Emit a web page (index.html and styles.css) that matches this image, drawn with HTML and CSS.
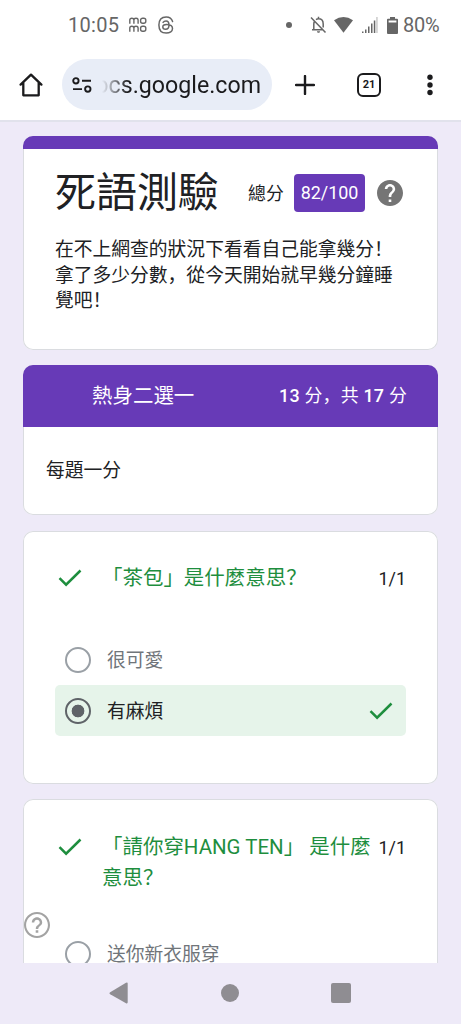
FILE: index.html
```
<!DOCTYPE html>
<html lang="zh-Hans">
<head>
<meta charset="utf-8">
<meta name="viewport" content="width=device-width, initial-scale=1">
<title>死語測驗</title>
<link rel="stylesheet" href="styles.css">
</head>
<body>
<div class="phone">
  <header class="chrome">
    <div class="status">
      <span class="clock">10:05</span>
      <svg class="momo" width="18" height="16" viewBox="0 0 18 16" fill="none" stroke="#666" stroke-width="1.4"><path d="M.8 6.800V3Q.8 1.200 2.800 1.200T4.900 3V6.800M4.900 3Q5 1.200 7 1.200T9.100 3V6.800M.8 14.800v-3.800Q.8 9.200 2.800 9.200T4.900 11v3.800M4.900 11Q5 9.200 7 9.200t2.100 1.800v3.800"/><rect x="11.600" y="1.200" width="5.200" height="5" rx="2"/><rect x="11.600" y="9.200" width="5.200" height="5" rx="2"/></svg>
      <svg class="threads" width="16" height="18" viewBox="0 0 16 18" fill="none" stroke="#666" stroke-width="1.500" stroke-linecap="round"><path d="M14.600 5.500C13.700 2.400 11.500 .9 8.200 .9C3.400 .9 .9 3.900 .9 9s2.500 8.100 7.300 8.100c3.700 0 6.300-1.900 6.300-4.500 0-2.700-2.700-4-6-4-2.400 0-3.700 1-3.700 2.400s1.200 2.300 2.800 2.300c2.200 0 3.400-1.500 3.400-4.300C11 6.300 9.900 5 8 5 6.700 5 5.700 5.500 5.100 6.400"/></svg>
      <span class="notice-dot"></span>
      <svg class="bell" width="17" height="18" viewBox="0 0 17 18" fill="none" stroke="#666" stroke-width="1.500"><path d="M1 1.500l14.500 15M2 13.700h10.500M3.800 13.500V8c0-1.200.3-2.200.9-3M6 3.600c.7-.5 1.500-.8 2.500-.8 2.900 0 4.700 2.200 4.700 5.200v3.500M8.500 .7v2"/><path d="M7 15.300h3c0 2-3 2-3 0z" fill="#666" stroke="none"/></svg>
      <svg class="wifi" width="19" height="16" viewBox="0 0 19 16"><path d="M0 3.300Q9.500-3.100 19 3.300L9.500 15.700z" fill="#666"/></svg>
      <svg class="signal" width="16" height="16" viewBox="0 0 16 16" fill="#666"><path d="M0 14.500h1.500V16H0zM3 12.500h1.500V16H3zM6 9.500h1.500V16H6zM9 6.500h1.500V16H9zM11.800 3.500h1.500V16h-1.500z"/><path d="M14.300 0h1.300v16h-1.300z" opacity=".4"/></svg>
      <svg class="battery" width="11" height="17" viewBox="0 0 11 17"><path d="M3 0h5v1.800h2q1 0 1 1V16q0 1-1 1H1q-1 0-1-1V2.800q0-1 1-1h2z" fill="#666"/><path d="M1.600 3.500h7.800v2H1.600z" fill="#fff"/></svg>
      <span class="percent">80%</span>
    </div>
    <div class="toolbar">
      <svg class="home" width="24" height="24" viewBox="0 0 24 24" fill="none" stroke="#1b1b1d" stroke-width="2.300" stroke-linecap="round" stroke-linejoin="round"><path d="M1.600 11.600L12 1.600l10.400 10M4.300 9.500v12.800h15.400V9.500"/></svg>
      <div class="omnibox">
        <svg width="20" height="16" viewBox="0 0 20 16" fill="none" stroke="#1b1b1d" stroke-width="1.900"><circle cx="3.900" cy="3.800" r="2.700"/><circle cx="15.800" cy="12.100" r="2.700"/><path d="M10 3.800h9M1 12.100h9"/></svg>
        <div class="url"><span>ocs.google.com</span></div>
      </div>
      <svg class="plus" width="20" height="20" viewBox="0 0 20 20" stroke="#1b1b1d" stroke-width="2.400" stroke-linecap="round"><path d="M10 1v18M1 10h18"/></svg>
      <div class="tabs">21</div>
      <svg class="more" width="6" height="22" viewBox="0 0 6 22" fill="#1b1b1d"><circle cx="3" cy="3.200" r="2.700"/><circle cx="3" cy="11" r="2.700"/><circle cx="3" cy="18.500" r="2.700"/></svg>
    </div>
  </header>

  <main class="page">
    <section class="card intro">
      <div class="accent"></div>
      <div class="title-row">
        <h1>死語測驗</h1>
        <span class="total">總分</span>
        <span class="score">82/100</span>
        <svg width="26" height="26" viewBox="2 2 20 20" fill="#757575"><path d="M12 2C6.480 2 2 6.480 2 12s4.480 10 10 10 10-4.480 10-10S17.520 2 12 2zm1 17h-2v-2h2v2zm2.070-7.750l-.9.920C13.450 12.900 13 13.500 13 15h-2v-.5c0-1.100.45-2.100 1.170-2.830l1.240-1.260c.37-.36.59-.86.59-1.410 0-1.100-.9-2-2-2s-2 .9-2 2H8c0-2.210 1.790-4 4-4s4 1.790 4 4c0 .88-.36 1.680-.93 2.250z"/></svg>
      </div>
      <p class="description">在不上網查的狀況下看看自己能拿幾分！<br>拿了多少分數，從今天開始就早幾分鐘睡<br>覺吧！</p>
    </section>

    <section class="card section">
      <div class="section-head"><h2>熱身二選一</h2><span><b>13</b> 分，共 <b>17</b> 分</span></div>
      <p>每題一分</p>
    </section>

    <section class="card question">
      <div class="question-head">
        <svg class="check" width="24" height="18" viewBox="0 0 24 18"><path d="M1.500 9.200l6.600 6.500L22.500 1.500" fill="none" stroke="#1e8e3e" stroke-width="2.500"/></svg>
        <h3>「茶包」是什麼意思？</h3>
        <span class="points">1/1</span>
      </div>
      <div class="option"><span class="radio"></span><span class="label">很可愛</span></div>
      <div class="option chosen"><span class="radio"></span><span class="label">有麻煩</span>
        <svg class="check" width="24" height="18" viewBox="0 0 24 18"><path d="M1.500 9.200l6.600 6.500L22.500 1.500" fill="none" stroke="#1e8e3e" stroke-width="2.500"/></svg>
      </div>
    </section>

    <section class="card question last">
      <div class="question-head">
        <svg class="check" width="24" height="18" viewBox="0 0 24 18"><path d="M1.500 9.200l6.600 6.500L22.500 1.500" fill="none" stroke="#1e8e3e" stroke-width="2.500"/></svg>
        <h3>「請你穿HANG TEN」 是什麼<br>意思？</h3>
        <span class="points">1/1</span>
      </div>
      <div class="option"><span class="radio"></span><span class="label">送你新衣服穿</span></div>
    </section>

    <svg class="help" width="26" height="26" viewBox="2 2 20 20" fill="#a3a3a3"><path d="M11 18h2v-2h-2v2zm1-16C6.480 2 2 6.480 2 12s4.480 10 10 10 10-4.480 10-10S17.520 2 12 2zm0 18.400c-4.600 0-8.400-3.800-8.400-8.400S7.400 3.600 12 3.600s8.400 3.800 8.400 8.400-3.800 8.400-8.400 8.400zM12 6c-2.210 0-4 1.790-4 4h1.900c0-1.200 .9-2.100 2.100-2.100s2.100 .9 2.100 2.100c0 2-3.050 1.750-3.050 5h1.900c0-2.250 3.050-2.500 3.050-5 0-2.210-1.790-4-4-4z"/></svg>
  </main>

  <nav class="system-nav">
    <svg width="20" height="22" viewBox="0 0 20 22" fill="#8f8d92"><path d="M17 .8q1.700-.9 1.700 1v18.500q0 1.700-1.700.9L1.200 12.200q-1.500-1 0-2z"/></svg>
    <span class="nav-home"></span>
    <span class="nav-recent"></span>
  </nav>
</div>
</body>
</html>
```
FILE: styles.css
```
* { box-sizing: border-box; }

body {
  margin: 0;
  background: #eeeaf8;
  color: #202124;
  font-family: Roboto, "Noto Sans CJK SC", sans-serif;
}

h1, h2, h3, p { margin: 0; font-weight: 400; }
svg { display: block; flex: none; }

.phone {
  width: 461px;
  height: 1024px;
  display: flex;
  flex-direction: column;
  overflow: hidden;
}

/* Browser chrome */
.chrome {
  height: 122px;
  flex: none;
  background: #fff;
  border-bottom: 2px solid #e1e2ec;
}
.status {
  height: 49px;
  padding: 1px 20px 0 68px;
  display: flex;
  align-items: center;
  color: #666;
  font-size: 20px;
}
.clock { width: 52px; letter-spacing: .3px; }
.momo { margin-left: 9px; }
.threads { margin-left: 11px; }
.notice-dot { width: 6px; height: 6px; border-radius: 50%; background: #666; margin-left: 112px; }
.bell { margin-left: 18px; }
.wifi { margin-left: 7px; }
.signal { margin-left: 9px; }
.battery { margin-left: 9px; }
.percent { margin-left: 5px; letter-spacing: -.2px; }

.toolbar {
  height: 71px;
  padding-left: 19px;
  display: flex;
  align-items: center;
}
.omnibox {
  width: 210px;
  height: 51px;
  margin-left: 19px;
  padding-left: 10px;
  display: flex;
  align-items: center;
  gap: 10px;
  border-radius: 26px;
  background: #e8edf7;
}
.url {
  width: 159px;
  display: flex;
  justify-content: flex-end;
  overflow: hidden;
  color: #1b1b1d;
  font-size: 23.200px;
  line-height: 32px;
  -webkit-mask-image: linear-gradient(90deg, transparent, #000 26px);
  mask-image: linear-gradient(90deg, transparent, #000 26px);
}
.plus { margin-left: 23px; }
.tabs {
  width: 24px;
  height: 24px;
  margin-left: 42px;
  border: 2.200px solid #1b1b1d;
  border-radius: 6px;
  color: #1b1b1d;
  font-size: 11px;
  font-weight: 700;
  line-height: 20px;
  text-align: center;
}
.more { margin-left: 46px; }

/* Form results */
.page {
  position: relative;
  height: 841px;
  flex: none;
  padding: 14px 23px 0;
  display: flex;
  flex-direction: column;
  gap: 16px;
  overflow: hidden;
}
.card {
  flex: none;
  background: #fff;
  box-shadow: inset 0 0 0 1px #dadce0;
  border-radius: 10px;
  overflow: hidden;
}
.intro { height: 214px; }
.accent { height: 13px; background: #673ab7; }
.title-row {
  height: 50px;
  margin: 19px 32px 0;
  display: flex;
  align-items: center;
}
h1 { width: 193px; font-size: 40.960px; line-height: 50px; }
.total { width: 46px; padding-bottom: 3px; font-size: 17.920px; }
.score {
  width: 71px;
  height: 38px;
  margin-right: 12px;
  border-radius: 4px;
  background: #673ab7;
  color: #fff;
  font-size: 17.920px;
  line-height: 37px;
  text-align: center;
}
.description { margin: 20px 32px 0; font-size: 18.770px; line-height: 25.600px; white-space: nowrap; }

.section { height: 150px; margin-top: -1px; }
.section-head {
  height: 62px;
  padding: 0 31px 4px 69px;
  display: flex;
  align-items: center;
  justify-content: space-between;
  background: #673ab7;
  color: #fff;
}
h2 { font-size: 20.480px; }
.section-head span { font-size: 17.920px; letter-spacing: .2px; }
b { font-weight: 500; }
.section p { padding: 31px 23px 0; font-size: 18.770px; line-height: 26px; }

.question { height: 253px; padding: 31px 32px 0; }
.question-head {
  height: 72px;
  display: flex;
  align-items: flex-start;
}
.question-head .check { margin: 7px 0 0 3px; }
h3 {
  width: 277px;
  margin-left: 20px;
  padding-top: 1px;
  color: #1e8e3e;
  font-size: 20.480px;
  line-height: 30.700px;
  white-space: nowrap;
}
.points { font-size: 17.920px; line-height: 34px; }
.option {
  height: 51px;
  padding: 0 13px 0 10px;
  display: flex;
  align-items: center;
  gap: 16px;
  border-radius: 5px;
  color: #70757a;
  font-size: 18.770px;
}
.label { padding-bottom: 2px; }
.radio {
  width: 26px;
  height: 26px;
  border: 2.500px solid #9aa0a6;
  border-radius: 50%;
}
.chosen { background: #e6f4ea; color: #202124; }
.chosen .radio {
  border-color: #5f6368;
  background: radial-gradient(circle, #5f6368 6px, transparent 6.700px);
}
.chosen .check { margin-left: auto; }
.last { margin-top: -1px; padding-top: 32px; }
.last .question-head { height: 97px; }

.help { position: absolute; left: 24px; top: 790px; }

/* Android navigation */
.system-nav {
  flex: 1;
  padding: 0 0 1px 109px;
  display: flex;
  align-items: center;
}
.nav-home { width: 18px; height: 18px; margin-left: 92px; border-radius: 50%; background: #8f8d92; }
.nav-recent { width: 20px; height: 20px; margin-left: 92px; border-radius: 2px; background: #8f8d92; }
```
